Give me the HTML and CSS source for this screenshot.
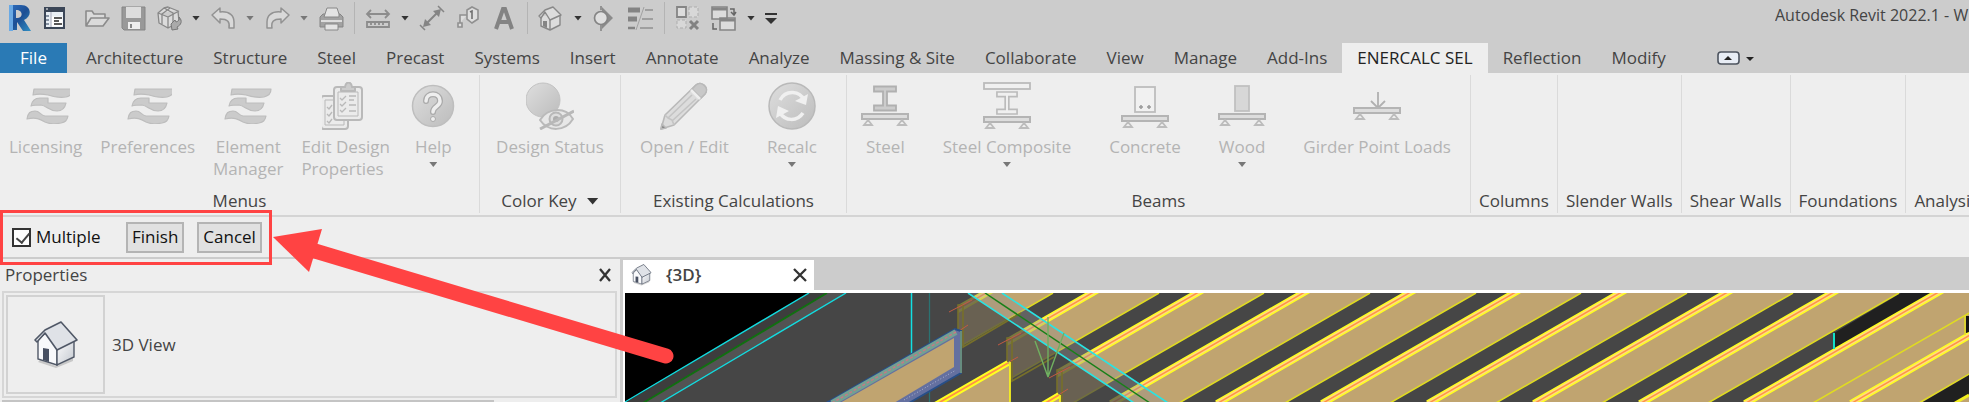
FILE: index.html
```html
<!DOCTYPE html>
<html lang="en">
<head>
<meta charset="utf-8">
<title>Autodesk Revit 2022.1</title>
<link rel="stylesheet" href="styles.css">
</head>
<body>
<svg class="defs" aria-hidden="true">
  <defs>
    <linearGradient id="grey" x1="0" y1="0" x2="1" y2="1"><stop offset="0" stop-color="#dedede"/><stop offset="1" stop-color="#bcbcbc"/></linearGradient>
    <linearGradient id="blue" x1="0" y1="0" x2="1" y2="1"><stop offset="0" stop-color="#2f6fc0"/><stop offset=".5" stop-color="#1d4f94"/><stop offset="1" stop-color="#2f8fc4"/></linearGradient>
    <linearGradient id="wall" x1="0" y1="0" x2="1" y2="1"><stop offset="0" stop-color="#fdfdfe"/><stop offset="1" stop-color="#c3c8cf"/></linearGradient>
    <symbol id="waves" viewBox="0 0 48 36">
      <g fill="#cbcbcb" stroke="#bdbdbd" stroke-width="1.2" stroke-linejoin="round">
        <path d="M8 1h39c0 5-3 7-7 8-8 1-12 0-18-2-5-1-11-1-15 0z"/>
        <path d="M5 18c1-6 4-8 9-8h8v5h18c-1 5-4 8-9 8-8 0-10-5-16-6-4 0-7 0-10 1z"/>
        <path d="M1 31c1-6 3-8 8-8s5 4 10 5h23c-1 5-3 6-7 7-5 1-12 1-16-1-5-3-9-5-18-3z"/>
      </g>
    </symbol>
    <symbol id="support" viewBox="0 0 48 14">
      <rect x="1" y="1" width="46" height="5" fill="#ddd" stroke="#b4b4b4" stroke-width="2"/>
      <path d="M7 7l-4 5h8zM41 7l-4 5h8z" fill="#eee" stroke="#bcbcbc" stroke-width="1.8"/>
    </symbol>
    <symbol id="ibeam" viewBox="0 0 24 26">
      <path d="M1 1h22v5h-9v14h9v5H1v-5h9V6H1z" stroke-width="1.8"/>
    </symbol>
    <symbol id="house" viewBox="0 0 44 48">
      <path d="M6 39l16 6 17-8v3L22 47 4 41z" fill="#999" opacity=".45"/>
      <path d="M4 18L12 12l11 15v17L4 38z" fill="#f8f9fb" stroke="#505867" stroke-width="1.4"/>
      <path d="M23 27l17-9v18l-17 8z" fill="url(#wall)" stroke="#505867" stroke-width="1.4"/>
      <path d="M1 19L11 9 27 1l16 18-20 10L11 12 3 21z" fill="#dfe2e7" stroke="#505867" stroke-width="1.6" stroke-linejoin="round"/>
      <path d="M9 27l6 1v13l-6-2z" fill="#485062"/>
    </symbol>
  </defs>
</svg>

<div class="app">
  <header class="titlebar">
    <nav class="quick" aria-label="Quick access">
      <button class="tool logo" aria-label="Revit"><svg viewBox="0 0 24 26"><path d="M1 0h12c10 0 12 11 3 15l7 11h-8l-6-9v8H1zM8 5v8c7 1 8-8 0-8z" fill="url(#blue)" fill-rule="evenodd"/><path d="M1 0h4v26H1z" fill="#6aa9e4"/></svg></button>
      <button class="tool" aria-label="Home"><svg viewBox="0 0 26 26"><rect x="3" y="3" width="19" height="20" fill="#e8eef4" stroke="#3b4657" stroke-width="2"/><path d="M2 2h21v5H2z" fill="#3b4657"/><path d="M4 4h2M10 12h10v9H10z" stroke="#fff" fill="#fff"/><path d="M9 7v15" stroke="#aab" /><path d="M4 11h3M4 15h3M4 19h3" stroke="#8793a3" stroke-width="2"/><path d="M12 13h8M12 16h5M12 19h8" stroke="#222" stroke-width="1.5"/></svg></button>
      <button class="tool second" aria-label="Open"><svg viewBox="0 0 26 26"><path d="M2 21V6h6l2 3h11v4M2 21l5-8h18l-6 8z" fill="#dadada" stroke="#8b8b8b" stroke-width="1.6" stroke-linejoin="round"/></svg></button>
      <button class="tool" aria-label="Save"><svg viewBox="0 0 26 26"><path d="M2 2h23v23H4l-2-2z" fill="#999" stroke="#858585"/><path d="M6 2h15v11H6z" fill="#ddd"/><path d="M8 17h12v7H8z" fill="#eee"/><path d="M11 19v4" stroke="#888" stroke-width="2"/></svg></button>
      <button class="tool" aria-label="Synchronize"><svg viewBox="0 0 26 26"><g fill="#dcdcdc" stroke="#888" stroke-width="1.3" stroke-linejoin="round"><path d="M2 8l6-5 4-1 10 4 1 11-11 6-9-5zM2 8l10 4 11-6M12 12v11"/><path d="M8 3l9 5v10M14 3l-8 6v10" fill="none"/></g><path d="M15 19l4-4 1 2c3-1 4-3 3-5 4 4 2 8-2 10l1 2-6 1z" fill="#aaa" stroke="#777"/></svg></button>
      <button class="drop" aria-label="Synchronize options"></button>
      <button class="tool" aria-label="Undo"><svg viewBox="0 0 26 26"><path d="M2 10l8-7v4c10-1 14 4 14 10v6h-5c1-6-1-9-9-9v4z" fill="#d9d9d9" stroke="#929292" stroke-width="1.5" stroke-linejoin="round"/></svg></button>
      <button class="drop dim" aria-label="Undo list"></button>
      <button class="tool" aria-label="Redo"><svg viewBox="0 0 26 26"><path d="M25 10l-8-7v4C7 6 3 11 3 17v6h5c-1-6 1-9 9-9v4z" fill="#d9d9d9" stroke="#929292" stroke-width="1.5" stroke-linejoin="round"/></svg></button>
      <button class="drop dim" aria-label="Redo list"></button>
      <button class="tool" aria-label="Print"><svg viewBox="0 0 26 26"><path d="M2 22V12l3-3h17l3 3v10z" fill="#a2a2a2" stroke="#858585"/><path d="M7 9l2-6h10l2 6v3H6zM7 19h13v6H7z" fill="#e3e3e3" stroke="#888"/><path d="M3 16h21" stroke="#ddd" stroke-width="2"/></svg></button>
      <span class="rule"></span>
      <button class="tool" aria-label="Measure"><svg viewBox="0 0 26 26"><path d="M2 9h22M6 5L2 9l4 4M20 5l4 4-4 4M2 17h22v5H2zM6 17v3m4-3v3m4-3v3m4-3v3" fill="none" stroke="#8c8c8c" stroke-width="1.8"/></svg></button>
      <button class="drop" aria-label="Measure options"></button>
      <button class="tool" aria-label="Aligned dimension"><svg viewBox="0 0 26 26"><path d="M6 20L20 6" stroke="#858585" stroke-width="2"/><path d="M4 22l2-8 6 6zM22 4l-2 8-6-6z" fill="#858585"/><path d="M1 20l5 5M19 1l6 6" stroke="#858585" stroke-width="1.5"/></svg></button>
      <button class="tool" aria-label="Tag by category"><svg viewBox="0 0 26 26"><path d="M12 5l5-3 6 3v9l-6 4-5-4zM12 10H5v8M3 18h4v4H3z" fill="#dedede" stroke="#909090" stroke-width="1.6"/><path d="M15 7l2-1v8" fill="none" stroke="#707070" stroke-width="1.6"/></svg></button>
      <button class="tool" aria-label="Text"><svg viewBox="0 0 26 26"><path d="M5 24L12 4h2l7 20M8 17h10" fill="none" stroke="#838383" stroke-width="4"/></svg></button>
      <span class="rule"></span>
      <button class="tool" aria-label="Default 3D view"><svg viewBox="0 0 26 26"><g fill="#dcdcdc" stroke="#888" stroke-width="1.4" stroke-linejoin="round"><path d="M3 11v10l9 4 10-5V10"/><path d="M1 11l6-6 8-3 8 8-11 5-5-8-4 6z"/><path d="M12 15v10"/></g><path d="M5 16h4v7l-4-2z" fill="#858585"/></svg></button>
      <button class="drop" aria-label="3D view options"></button>
      <button class="tool" aria-label="Section"><svg viewBox="0 0 26 26"><path d="M10 2l11 11-11 11z" fill="#8b8b8b"/><circle cx="9" cy="13" r="6.500" fill="#dfdfdf" stroke="#858585" stroke-width="1.700"/><path d="M9 20v6M9 1v4" stroke="#858585" stroke-width="1.600"/></svg></button>
      <button class="tool" aria-label="Thin lines"><svg viewBox="0 0 26 26"><path d="M0 5h12M0 14h9" stroke="#838383" stroke-width="5"/><path d="M0 23h7" stroke="#838383" stroke-width="2.500"/><path d="M17 5h8M14 14h11M12 23h13" stroke="#909090" stroke-width="1.500"/><path d="M16 2L8 25" stroke="#a2a2a2"/></svg></button>
      <span class="rule"></span>
      <button class="tool" aria-label="Close inactive views"><svg viewBox="0 0 26 26"><path d="M2 2h9v10H2z" fill="#ddd" stroke="#858585" stroke-width="1.800"/><path d="M14 2h9v10h-9zM2 15h9v8H2z" fill="#d8d8d8" stroke="#adadad" stroke-dasharray="3 2"/><path d="M15 16l8 8m0-8l-8 8" stroke="#828282" stroke-width="3"/></svg></button>
      <button class="tool" aria-label="Switch windows"><svg viewBox="0 0 26 26"><path d="M1 2h15v12H1zM9 13h15v12H9z" fill="#dcdcdc" stroke="#858585" stroke-width="1.600"/><path d="M1 4h15M9 15h15" stroke="#858585" stroke-width="3"/><path d="M19 4h4v6m-3-3l3 3 2-3M6 24H2v-6" fill="none" stroke="#666" stroke-width="1.500"/></svg></button>
      <button class="drop" aria-label="Window list"></button>
      <button class="tool" aria-label="Customize quick access"><svg viewBox="0 0 26 26"><path d="M0 9h12" stroke="#333" stroke-width="2"/><path d="M0 13h12l-6 6z" fill="#333"/></svg></button>
    </nav>
    <div class="product">Autodesk Revit 2022.1 - W</div>
  </header>

  <nav class="tabs" aria-label="Ribbon tabs">
    <button class="tab file">File</button>
    <button class="tab">Architecture</button>
    <button class="tab">Structure</button>
    <button class="tab">Steel</button>
    <button class="tab">Precast</button>
    <button class="tab">Systems</button>
    <button class="tab">Insert</button>
    <button class="tab">Annotate</button>
    <button class="tab">Analyze</button>
    <button class="tab">Massing &amp; Site</button>
    <button class="tab">Collaborate</button>
    <button class="tab">View</button>
    <button class="tab">Manage</button>
    <button class="tab">Add-Ins</button>
    <button class="tab active">ENERCALC SEL</button>
    <button class="tab">Reflection</button>
    <button class="tab">Modify</button>
    <button class="minimize" aria-label="Minimize ribbon"><svg viewBox="0 0 38 16"><rect x="1" y="2" width="21" height="12" rx="3" fill="#e8edf5" stroke="#4d545f" stroke-width="1.600"/><path d="M7 10h8l-4-4zM29 7h8l-4 4z" fill="#222"/></svg></button>
  </nav>

  <section class="ribbon" aria-label="ENERCALC SEL">
    <div class="panel menus">
      <div class="commands">
        <button class="cmd"><svg viewBox="-4 -7 48 48"><use href="#waves" x="0" y="-1" width="48" height="36"/></svg><span>Licensing</span></button>
        <button class="cmd"><svg viewBox="-4 -7 48 48"><use href="#waves" x="-1" y="-1" width="48" height="36"/></svg><span>Preferences</span></button>
        <button class="cmd"><svg viewBox="0 -7 48 48"><use href="#waves" x="0" y="-1" width="48" height="36"/></svg><span>Element<br>Manager</span></button>
        <button class="cmd"><svg viewBox="4 0 48 48"><g fill="#ebebeb" stroke="#b9b9b9" stroke-width="2" stroke-linejoin="round"><rect x="3" y="14" width="27" height="33" rx="3"/><path d="M7 18h19v25H7z" stroke-width="1"/><rect x="16" y="5" width="28" height="33" rx="3"/><path d="M20 10h20v24H20z" stroke-width="1"/><path d="M23 9V5h4c1-6 6-6 7 0h3v4z" fill="#ccc"/><path d="M22 16l2 2 4-4M22 22l2 2 4-4M22 28l2 2 4-4M31 14h7M31 18h5M31 23h7M31 29h7M9 25l2 2 3-4M9 32l2 2 3-4M9 39l2 2 3-4" fill="none" stroke-width="1.300"/></g></svg><span class="left">Edit Design<br>Properties</span></button>
        <button class="cmd wide"><svg viewBox="0 0 48 48"><circle cx="24" cy="24" r="20.500" fill="url(#grey)" stroke="#bebebe" stroke-width="1.500"/><path d="M17 19c0-9 14-9 14 0 0 6-7 5-7 11" fill="none" stroke="#aaa" stroke-width="6" stroke-linecap="round"/><path d="M17 19c0-9 14-9 14 0 0 6-7 5-7 11" fill="none" stroke="#eee" stroke-width="3.500" stroke-linecap="round"/><circle cx="24" cy="37" r="2.500" fill="#eee" stroke="#aaa"/></svg><span>Help</span><i class="caret"></i></button>
      </div>
      <h2>Menus</h2>
    </div>
    <div class="panel key">
      <div class="commands">
        <button class="cmd"><svg viewBox="0 0 48 48"><circle cx="17" cy="18" r="17" fill="url(#grey)" stroke="#c2c2c2"/><path d="M14 38c8-13 26-13 33-1-8 13-25 13-33 1z" fill="#e7e7e7" stroke="#bababa" stroke-width="2"/><circle cx="30" cy="37" r="6.500" fill="#ddd" stroke="#b8b8b8" stroke-width="2"/><circle cx="30" cy="37" r="3" fill="#adadad"/><path d="M14 47l34-18" stroke="#b8b8b8" stroke-width="3"/></svg><span>Design Status</span></button>
      </div>
      <h2><button class="panel-menu">Color Key<i class="caret big"></i></button></h2>
    </div>
    <div class="panel roomy existing">
      <div class="commands">
        <button class="cmd"><svg viewBox="0 0 48 48"><g fill="#dcdcdc" stroke="#b9b9b9" stroke-width="1.600" stroke-linejoin="round"><path d="M1 47l4-14L36 3c5-5 14 3 9 9L14 43z"/><path d="M32 7l4-4c5-5 14 3 9 9l-4 4z" fill="#c8c8c8"/><path d="M31 8l9 9" stroke="#eee" stroke-width="2.500"/><path d="M8 36L32 13m-20 26L36 17M5 33l3 3 4 2 2 5" fill="none" stroke="#c4c4c4"/><path d="M1 47l1-5 4 4z" fill="#888"/></g></svg><span>Open / Edit</span></button>
        <button class="cmd"><svg viewBox="0 0 48 48"><circle cx="24" cy="24" r="23" fill="url(#grey)" stroke="#b9b9b9" stroke-width="1.500"/><g fill="none" stroke="#f0f0f0" stroke-width="3.500"><path d="M12 18c6-11 20-9 24 0M12 31c5 8 17 9 23 0"/></g><path d="M40 12l-2 11-11-4zM8 36l2-12 11 5z" fill="#f0f0f0"/></svg><span>Recalc</span><i class="caret"></i></button>
      </div>
      <h2>Existing Calculations</h2>
    </div>
    <div class="panel roomy">
      <div class="commands">
        <button class="cmd"><svg viewBox="0 0 48 48"><use href="#ibeam" x="12" y="3" width="24" height="27" fill="#ccc" stroke="#b0b0b0"/><use href="#support" x="0" y="31" width="48" height="14"/></svg><span>Steel</span></button>
        <button class="cmd"><svg viewBox="0 0 48 48"><rect x="1" y="1" width="46" height="6" fill="#f0f0f0" stroke="#bbb" stroke-width="1.800"/><use href="#ibeam" x="13" y="9" width="22" height="24" fill="#f0f0f0" stroke="#bbb"/><use href="#support" x="0" y="34" width="48" height="14"/></svg><span>Steel Composite</span><i class="caret"></i></button>
        <button class="cmd"><svg viewBox="0 0 48 48"><rect x="14" y="5" width="20" height="25" fill="#f1f1f1" stroke="#bdbdbd" stroke-width="1.800"/><path d="M18 25h4m-2-2v4m6-2h4m-2-2v4" stroke="#999" stroke-width="1.500"/><use href="#support" x="0" y="33" width="48" height="14"/></svg><span>Concrete</span></button>
        <button class="cmd"><svg viewBox="0 0 48 48"><rect x="17" y="4" width="14" height="25" fill="#d7d7d7" stroke="#c0c0c0" stroke-width="1.800"/><use href="#support" x="0" y="31" width="48" height="14"/></svg><span>Wood</span><i class="caret"></i></button>
        <button class="cmd"><svg viewBox="0 0 48 48"><path d="M25 10v15m-7-6l7 7 7-7" fill="none" stroke="#b0b0b0" stroke-width="1.800"/><use href="#support" x="0" y="25" width="48" height="14"/></svg><span>Girder Point Loads</span></button>
      </div>
      <h2>Beams</h2>
    </div>
    <div class="panel"><h2>Columns</h2></div>
    <div class="panel"><h2>Slender Walls</h2></div>
    <div class="panel"><h2>Shear Walls</h2></div>
    <div class="panel"><h2>Foundations</h2></div>
    <div class="panel"><h2>Analysis</h2></div>
  </section>

  <form class="options">
    <label class="multiple"><input type="checkbox" checked>Multiple</label>
    <button type="button" class="action">Finish</button>
    <button type="button" class="action">Cancel</button>
  </form>

  <main class="workspace">
    <aside class="properties">
      <div class="palette-head"><span>Properties</span><button class="close" aria-label="Close properties"><svg viewBox="0 0 14 14"><path d="M2 1l10 12M12 1L2 13" stroke="#333" stroke-width="2.300"/></svg></button></div>
      <div class="type">
        <div class="thumb"><svg viewBox="0 0 44 48"><use href="#house"/></svg></div>
        <span>3D View</span>
      </div>
      <div class="filter"></div>
    </aside>
    <section class="view">
      <div class="view-tabs">
        <div class="view-tab"><svg class="mini" viewBox="0 0 44 48"><use href="#house"/></svg><span>{3D}</span><button class="close" aria-label="Close view"><svg viewBox="0 0 14 14"><path d="M1 1l12 12M13 1L1 13" stroke="#333" stroke-width="2.300"/></svg></button></div>
      </div>
      <svg class="model" viewBox="625 292 1344 110" preserveAspectRatio="xMinYMin slice" role="img" aria-label="3D model">
        <defs>
          <g id="joist">
            <path d="M981 292h72L862 402h-72z" fill="#c0a470"/>
            <path d="M1053 292L862 402" stroke="#e0dc20" stroke-width="1.500"/>
            <path d="M993 288L794 402.600" stroke="#ffff20" stroke-width="7"/>
            <path d="M993 288L794 402.600" stroke="#ffdc80" stroke-width="4"/>
            <path d="M993 288L794 402.600" stroke="#ff9048" stroke-width="1.500"/>
          </g>
          <clipPath id="c1"><path d="M958 280h200v140H958z"/></clipPath>
          <clipPath id="c2"><path d="M1007 280h200v140h-200z"/></clipPath>
          <clipPath id="c3"><path d="M1057 280h300v140h-300z"/></clipPath>
        </defs>
        <path d="M625 292h1344v110H625z"/>
        <path d="M809 292h1160v110H625z" fill="#464646"/>
        <path d="M809 292h18L643 402h-18z" fill="#3d3d3d"/>
        <path d="M827 292h19L660 402h-17z" fill="#535353"/>
        <path d="M809 292L625 401M846 292L660 402" stroke="#12dce0" stroke-width="1.400"/>
        <path d="M827 292L643 402" stroke="#107010" stroke-width="1.800"/>
        <path d="M911.500 292v62" stroke="#12e0e4" stroke-width="1.500"/>
        <path d="M929.500 292v110" stroke="#2b7373" stroke-width="1.300"/>
        <path d="M1901 292h31l-98 56v-16z" fill="#202020"/>
        <g clip-path="url(#c1)"><use href="#joist"/></g>
        <g clip-path="url(#c2)"><use href="#joist" x="106"/></g>
        <g clip-path="url(#c3)"><use href="#joist" x="211"/></g>
        <use href="#joist" x="317"/>
        <use href="#joist" x="423"/>
        <use href="#joist" x="528"/>
        <use href="#joist" x="634"/>
        <use href="#joist" x="740"/>
        <path d="M1940 292h29v110h-220z" fill="#c0a470"/>
        <use href="#joist" x="846"/>
        <use href="#joist" x="951"/>
        <use href="#joist" x="1057"/>
        <path d="M1965 314v20" stroke="#e4e020" stroke-width="1.500"/>
        <path d="M1966 315h3v16l-3 1z" fill="#151515"/>
        <path d="M1921 402l48-28v21l-13 7z" fill="#202020"/>
        <path d="M1955 402l14-8" stroke="#f4f020" stroke-width="3"/>
        <path d="M1834 332v16" stroke="#12e0c8" stroke-width="2"/>
        <path d="M955 292h13l166 110H955z" fill="#464646" opacity=".72"/>
        <path d="M968 292h34l166 110h-34z" fill="#909090" opacity=".38"/>
        <path d="M958 346v-42h5v42l58-34M1007 380v-43h5v43l42-24M1057 402v-33h5v33" fill="none" stroke="#77702a" stroke-width="1.600"/>
        <path d="M949 311l23-12M959 330l9-6M998 344l23-12M1009 361l9-5M1049 377l21-11M1060 393l8-5" stroke="#c35a42"/>
        <path d="M968 292l166 110M1002 292l166 110" stroke="#28e4e4" stroke-width="1.600"/>
        <path d="M985 292l165 110" stroke="#188018" stroke-width="1.500"/>
        <path d="M1048 316v60l-13-36M1048 376l16-44" fill="none" stroke="#70b060" stroke-width="1.400"/>
        <path d="M826 402l129-74 6 2v42l-52 30z" fill="#6470a0" stroke="#284f88" stroke-width="2"/>
        <path d="M840 402l114-65v29l-60 36z" fill="#c0a470"/>
        <path d="M832 402l124-71" stroke="#74a092" stroke-width="6"/>
        <path d="M832 402l124-71" stroke="#c77983" stroke-width="1.500" stroke-dasharray="3 2"/>
        <path d="M904 399l52-30" stroke="#aeb4d0" stroke-dasharray="1 2"/>
        <path d="M961 330v42" stroke="#7ba17c" stroke-width="1.500"/>
        <path d="M936 402l74-42v42zM1043 402l17-9v9z" fill="#c0a470"/>
        <path d="M935 404l73-42M1042 404l17-10" stroke="#ffff20" stroke-width="6"/>
        <path d="M935 404l73-42M1042 404l17-10" stroke="#ff9048" stroke-width="1.800"/>
        <path d="M1010 361v41M1060 394v8" stroke="#f4f020" stroke-width="1.800"/>
      </svg>
    </section>
  </main>

  <div class="highlight"></div>
  <svg class="arrow" viewBox="0 0 402 136" aria-hidden="true"><path d="M42 22L393 127" stroke="#ff4343" stroke-width="15" stroke-linecap="round"/><path d="M0 8L49 0 36 43z" fill="#ff4343"/></svg>
</div>
</body>
</html>
```

FILE: styles.css
```css
* { box-sizing: border-box; }

body {
  margin: 0;
  overflow: hidden;
  background: #eee;
  color: #444;
  font: 17px/22px "Open Sans", "Noto Sans", sans-serif;
}

button {
  padding: 0;
  border: 0;
  background: none;
  color: inherit;
  font: inherit;
  white-space: nowrap;
}

svg { display: block; }

.defs {
  position: absolute;
  width: 0;
  height: 0;
}

.app {
  position: relative;
  display: flex;
  flex-direction: column;
  min-height: 100vh;
}

/* Title bar */
.titlebar {
  display: flex;
  justify-content: space-between;
  height: 43px;
  padding: 4px 0 0 8px;
  background: #ccc;
}

.quick {
  display: flex;
  align-items: center;
  gap: 10px;
  height: 28px;
}

.tool { width: 26px; height: 26px; }
.tool svg { width: 26px; height: 26px; }
.tool.logo, .tool.logo svg { width: 24px; }
.tool.second { margin-left: 6px; }

.drop {
  width: 8px;
  height: 5px;
  background: #333;
  clip-path: polygon(0 0, 100% 0, 50% 100%);
}

.drop.dim { background: #777; }

.rule {
  width: 1px;
  height: 32px;
  background: #b4b4b4;
}

.product {
  width: 194px;
  overflow: hidden;
  font-size: 16px;
  white-space: nowrap;
}

/* Tabs */
.tabs {
  display: flex;
  height: 30px;
  background: #ccc;
}

.tab { padding: 0 15px; }

.tab.file {
  width: 67px;
  margin-right: 4px;
  background: #2a7ab5;
  color: #fff;
}

.tab.active {
  background: #eee;
  color: #222;
}

.minimize {
  margin-left: 36px;
  width: 38px;
}

/* Ribbon */
.ribbon {
  display: flex;
  height: 144px;
  padding: 2px 0;
  border-bottom: 2px solid #d4d4d4;
  overflow: hidden;
}

.panel {
  display: flex;
  flex: none;
  flex-direction: column;
  padding: 7px 8px 1px;
  border-right: 1px solid #dadada;
}

.panel h2 {
  margin: auto 0 0;
  font-size: 17px;
  font-weight: 400;
  text-align: center;
}

.commands { display: flex; }
.menus { width: 480px; padding: 7px 0 1px; }
.key { width: 141px; }
.key .commands { justify-content: center; }
.roomy { padding: 7px 0 1px; }
.existing .commands { padding-right: 10px; }

.cmd {
  display: flex;
  flex-direction: column;
  align-items: center;
  padding: 0 9px;
  color: #b4b4b4;
}

.cmd svg {
  width: 48px;
  height: 48px;
  margin: 0 -6px 6px;
}

.cmd .left { text-align: left; }
.cmd.wide { padding: 0 16px; }
.key .cmd { padding: 0; }
.roomy .cmd { padding: 0 19px; }

.caret {
  width: 8px;
  height: 5px;
  margin-top: 4px;
  background: #777;
  clip-path: polygon(0 0, 100% 0, 50% 100%);
}

.panel-menu {
  display: inline-flex;
  align-items: center;
  gap: 10px;
}

.caret.big {
  width: 12px;
  height: 7px;
  margin: 0;
  background: #333;
}

/* Options bar */
.options {
  display: flex;
  align-items: center;
  height: 42px;
  padding-left: 12px;
  gap: 13px;
  border-bottom: 2px solid #ccc;
  color: #111;
}

.multiple {
  display: flex;
  align-items: center;
  gap: 5px;
  width: 101px;
}

.multiple input {
  appearance: none;
  width: 19px;
  height: 19px;
  margin: 0;
  border: 2px solid #333;
  background: #fff;
}

.multiple input:checked::after {
  content: "";
  display: block;
  width: 6px;
  height: 11px;
  margin: 0 0 0 5px;
  border: solid #444;
  border-width: 0 2px 2px 0;
  transform: rotate(40deg);
}

.action {
  height: 31px;
  padding: 0 4px;
  border: 2px solid #b4b4b4;
  background: #e1e1e1;
}

/* Workspace */
.workspace {
  display: flex;
  flex: 1;
}

.properties {
  display: flex;
  flex: none;
  flex-direction: column;
  width: 620px;
  padding: 0 3px 0 2px;
}

.palette-head {
  display: flex;
  align-items: center;
  justify-content: space-between;
  height: 32px;
  padding: 0 5px 0 3px;
}

.type {
  display: flex;
  align-items: center;
  gap: 7px;
  padding: 2px;
  border: 2px solid #d6d6d6;
}

.close, .close svg {
  width: 14px;
  height: 14px;
}

.thumb {
  display: grid;
  place-items: center;
  width: 99px;
  height: 99px;
  border: 2px solid #d2d2d2;
}

.thumb svg {
  width: 44px;
  height: 48px;
}

.filter {
  width: 80%;
  height: 3px;
  margin-top: 2px;
  background: #c4c4c4;
}

.view {
  display: flex;
  flex: 1;
  flex-direction: column;
  min-width: 0;
  padding-left: 3px;
  background: #ccc;
}

.view-tabs {
  display: flex;
  height: 34px;
  padding-top: 1px;
  border-bottom: 3px solid #fff;
}

.view-tab {
  display: flex;
  align-items: center;
  width: 191px;
  padding: 0 7px;
  background: #fff;
  font-weight: 600;
}

.view-tab .close { margin-left: auto; }

.mini {
  width: 23px;
  height: 22px;
  margin-right: 13px;
}

.model {
  width: 100%;
  height: 110px;
  border-left: 2px solid #fff;
}

/* Callout laid over the window */
.highlight {
  position: absolute;
  top: 210px;
  left: 0;
  width: 272px;
  height: 55px;
  border: 3px solid #ff4343;
}

.arrow {
  position: absolute;
  top: 229px;
  left: 273px;
  width: 402px;
  height: 136px;
}
```
